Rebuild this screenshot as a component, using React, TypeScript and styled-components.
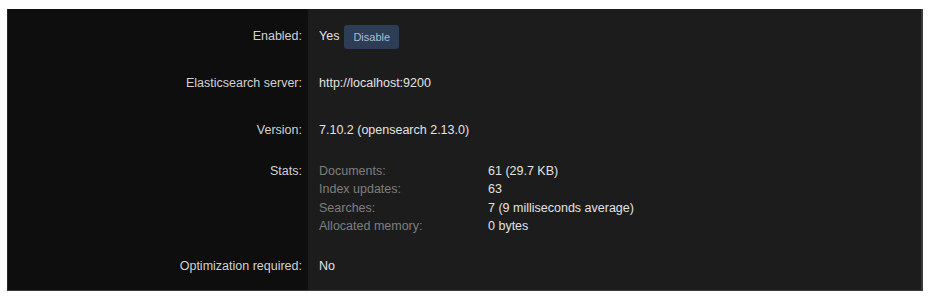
import React from "react";
import styled, { createGlobalStyle } from "styled-components";

const Global = createGlobalStyle`
  html, body { margin: 0; padding: 0; background: #ffffff; }
  body { font-family: "Liberation Sans", Arial, Helvetica, sans-serif; }
`;

const Page = styled.div`
  padding: 9px 8px 0 7px;
`;

const Panel = styled.div`
  display: grid;
  grid-template-columns: 301px 1fr;
  background: linear-gradient(to right, #0e0e0e 0 300px, #1c1c1c 300px);
  border-left: 1px solid #262626;
  border-right: 2px solid #3a3a3a;
  border-bottom: 1px solid #3a3a3a;
  padding-top: 4px;
  font-size: 12.5px;
`;

const Label = styled.div<{ $top?: boolean }>`
  text-align: right;
  color: #d2d2d2;
  padding: ${(p) => (p.$top ? "8px 7px 0 0" : "9px 7px 9px 0")};
  line-height: ${(p) => (p.$top ? "18.3px" : "29px")};
  align-self: start;
`;

const Value = styled.div`
  color: #e2e2e2;
  padding: 9px 0 9px 10px;
  line-height: 29px;
  display: flex;
  align-items: center;
  gap: 5px;
`;

const DisableButton = styled.button`
  height: 24px;
  padding: 0 9px;
  border: none;
  border-radius: 3px;
  background: #2c3d55;
  color: #a9bdd8;
  font-family: "Liberation Sans", Arial, sans-serif;
  font-size: 11px;
  line-height: 24px;
`;

const StatsGrid = styled.div`
  display: grid;
  grid-template-columns: 169px 1fr;
  line-height: 18.3px;
  padding: 8px 0 7.5px 10px;
`;

const StatLabel = styled.div`
  color: #7e7e7e;
`;

const StatValue = styled.div`
  color: #e2e2e2;
`;

const stats: [string, string][] = [
  ["Documents:", "61 (29.7 KB)"],
  ["Index updates:", "63"],
  ["Searches:", "7 (9 milliseconds average)"],
  ["Allocated memory:", "0 bytes"],
];

export default function App() {
  return (
    <>
      <Global />
      <Page>
        <Panel>
          <Label>Enabled:</Label>
          <Value>
            Yes <DisableButton>Disable</DisableButton>
          </Value>
          <Label>Elasticsearch server:</Label>
          <Value>http://localhost:9200</Value>
          <Label>Version:</Label>
          <Value>7.10.2 (opensearch 2.13.0)</Value>
          <Label $top>Stats:</Label>
          <StatsGrid>
            {stats.map(([k, v]) => (
              <React.Fragment key={k}>
                <StatLabel>{k}</StatLabel>
                <StatValue>{v}</StatValue>
              </React.Fragment>
            ))}
          </StatsGrid>
          <Label>Optimization required:</Label>
          <Value>No</Value>
        </Panel>
      </Page>
    </>
  );
}
